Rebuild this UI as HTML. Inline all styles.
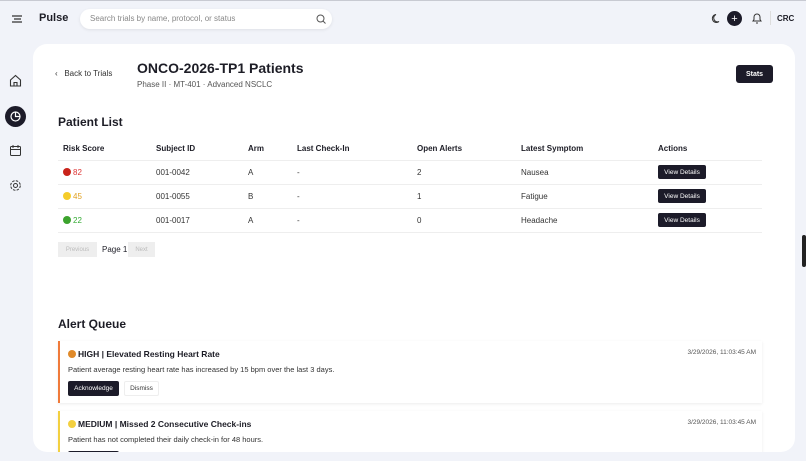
<!DOCTYPE html>
<html><head><meta charset="utf-8"><style>
*{box-sizing:border-box;margin:0;padding:0}
body{width:806px;height:461px;overflow:hidden;background:#f1f3f9;font-family:"Liberation Sans",sans-serif;color:#1d1d26;position:relative;border-top:1px solid #c8cad2}
.abs{position:absolute}
.card{left:33px;top:43px;width:762px;height:408px;background:#fff;border-radius:14px;overflow:hidden}
.search{left:80px;top:8px;width:252px;height:20px;background:#fff;border-radius:10px;box-shadow:0 1px 3px rgba(0,0,0,.08);font-size:8px;color:#888;padding:0 10px;line-height:20px}
th{font-size:8px;font-weight:bold;text-align:left;height:22px}
td{font-size:8px;height:24px;border-top:1px solid #eee;color:#333}
.dot{display:inline-block;width:8px;height:8px;border-radius:50%;vertical-align:-1px;margin-right:2px}
.fc{display:flex;align-items:center;justify-content:center}
.vb{background:#1c1b29;color:#fff;font-size:6.5px;width:48px;height:14px;border-radius:2px;display:inline-flex;align-items:center;justify-content:center}
.btn{font-size:6.5px;border-radius:2px;height:15px;display:flex;align-items:center;justify-content:center}
.alert{left:25px;width:704px;background:#fff;box-shadow:0 1px 3px rgba(0,0,0,.08)}
</style></head><body>
<svg class="abs" style="left:11px;top:13px" width="12" height="10"><path d="M1 2h10M3 5h7M1 8h10" stroke="#333" stroke-width="1.3"/></svg>
<div class="abs" style="left:39px;top:11px;font-size:11px;font-weight:bold">Pulse</div>
<div class="abs search">Search trials by name, protocol, or status
<svg class="abs" style="right:6px;top:5px" width="10" height="10"><circle cx="4.5" cy="4.5" r="3.5" fill="none" stroke="#555"/><path d="M7 7l2.5 2.5" stroke="#555"/></svg></div>
<svg class="abs" style="left:711px;top:12px" width="11" height="11"><path d="M8 8.5A4 4 0 1 1 5 1.5a3.2 3.2 0 0 0 3 7z" fill="none" stroke="#333"/></svg>
<div class="abs fc" style="left:727px;top:10px;width:15px;height:15px;border-radius:50%;background:#1c1b29;color:#fff;font-size:11px">+</div>
<svg class="abs" style="left:751px;top:11px" width="12" height="13"><path d="M2 9h8L9 7.5V5a3 3 0 0 0-6 0v2.5zM5 11h2" fill="none" stroke="#333"/></svg>
<div class="abs" style="left:770px;top:10px;width:1px;height:14px;background:#ddd"></div>
<div class="abs" style="left:777px;top:13px;font-size:8px;font-weight:bold">CRC</div>
<svg class="abs" style="left:9px;top:73px" width="13" height="13"><path d="M1.5 6L6.5 1.5 11.5 6V12H1.5z M5 12V8.5h3V12" fill="none" stroke="#333" stroke-width="1.1"/></svg>
<div class="abs" style="left:5px;top:105px;width:21px;height:21px;border-radius:50%;background:#1c1b29"></div>
<svg class="abs" style="left:9px;top:109px" width="13" height="13"><circle cx="6.5" cy="6.5" r="4.5" fill="none" stroke="#fff" stroke-width="1.2"/><path d="M6.5 2v4.5H11" fill="none" stroke="#fff" stroke-width="1.2"/></svg>
<svg class="abs" style="left:9px;top:143px" width="13" height="13"><rect x="1.5" y="2.5" width="10" height="9" rx="1" fill="none" stroke="#333"/><path d="M1.5 5.5h10M4 1v3M9 1v3" stroke="#333"/></svg>
<svg class="abs" style="left:9px;top:178px" width="13" height="13"><circle cx="6.5" cy="6.5" r="2" fill="none" stroke="#333"/><circle cx="6.5" cy="6.5" r="4.8" fill="none" stroke="#333" stroke-dasharray="2.5 1.3"/></svg>
<div class="abs" style="left:802px;top:234px;width:4px;height:32px;background:#222;border-radius:2px"></div>
<div class="abs card">
<div class="abs" style="left:22px;top:25px;font-size:8px;color:#333">‹&nbsp;&nbsp; Back to Trials</div>
<div class="abs" style="left:104px;top:16px;font-size:14px;font-weight:bold">ONCO-2026-TP1 Patients</div>
<div class="abs" style="left:104px;top:36px;font-size:8px;color:#555">Phase II · MT-401 · Advanced NSCLC</div>
<div class="abs fc" style="left:703px;top:21px;width:37px;height:18px;background:#1c1b29;color:#fff;border-radius:3px;font-size:7px;font-weight:bold">Stats</div>
<div class="abs" style="left:25px;top:71px;font-size:12px;font-weight:bold">Patient List</div>
<table class="abs" style="left:25px;top:94px;width:704px;border-collapse:collapse">
<tr><th style="width:98px;padding-left:5px">Risk Score</th><th style="width:92px">Subject ID</th><th style="width:49px">Arm</th><th style="width:120px">Last Check-In</th><th style="width:104px">Open Alerts</th><th style="width:137px">Latest Symptom</th><th>Actions</th></tr>
<tr><td style="padding-left:5px;color:#d33"><span class="dot" style="background:#c9231b"></span>82</td><td>001-0042</td><td>A</td><td>-</td><td>2</td><td>Nausea</td><td><span class="vb">View Details</span></td></tr>
<tr><td style="padding-left:5px;color:#e0a020"><span class="dot" style="background:#f5cc2a"></span>45</td><td>001-0055</td><td>B</td><td>-</td><td>1</td><td>Fatigue</td><td><span class="vb">View Details</span></td></tr>
<tr><td style="padding-left:5px;color:#3a3"><span class="dot" style="background:#3ca32d"></span>22</td><td>001-0017</td><td>A</td><td>-</td><td>0</td><td>Headache</td><td><span class="vb">View Details</span></td></tr>
<tr><td colspan="7" style="height:1px"></td></tr>
</table>
<div class="abs fc" style="left:25px;top:198px;width:39px;height:15px;background:#eee;color:#bbb;font-size:6px">Previous</div>
<div class="abs" style="left:69px;top:201px;font-size:8px">Page 1</div>
<div class="abs fc" style="left:95px;top:198px;width:27px;height:15px;background:#eee;color:#bbb;font-size:6px">Next</div>
<div class="abs" style="left:25px;top:273px;font-size:12px;font-weight:bold">Alert Queue</div>
<div class="abs alert" style="top:297px;height:62px;border-left:2px solid #f07a3a">
<div class="abs" style="left:8px;top:8px;font-size:8.5px;font-weight:bold"><span class="dot" style="background:#e08a2a"></span>HIGH | Elevated Resting Heart Rate</div>
<div class="abs" style="right:6px;top:8px;font-size:6.5px;color:#555">3/29/2026, 11:03:45 AM</div>
<div class="abs" style="left:8px;top:24px;font-size:7.5px;color:#333">Patient average resting heart rate has increased by 15 bpm over the last 3 days.</div>
<div class="abs btn" style="left:8px;top:40px;width:51px;background:#1c1b29;color:#fff">Acknowledge</div>
<div class="abs btn" style="left:64px;top:40px;width:35px;border:1px solid #eee;color:#333">Dismiss</div>
</div>
<div class="abs alert" style="top:367px;height:50px;border-left:2px solid #f3d040">
<div class="abs" style="left:8px;top:8px;font-size:8.5px;font-weight:bold"><span class="dot" style="background:#f3d040"></span>MEDIUM | Missed 2 Consecutive Check-ins</div>
<div class="abs" style="right:6px;top:8px;font-size:6.5px;color:#555">3/29/2026, 11:03:45 AM</div>
<div class="abs" style="left:8px;top:24px;font-size:7.5px;color:#333">Patient has not completed their daily check-in for 48 hours.</div>
<div class="abs btn" style="left:8px;top:40px;width:51px;height:10px;background:#1c1b29"></div>
</div>
</div>
</body></html>
